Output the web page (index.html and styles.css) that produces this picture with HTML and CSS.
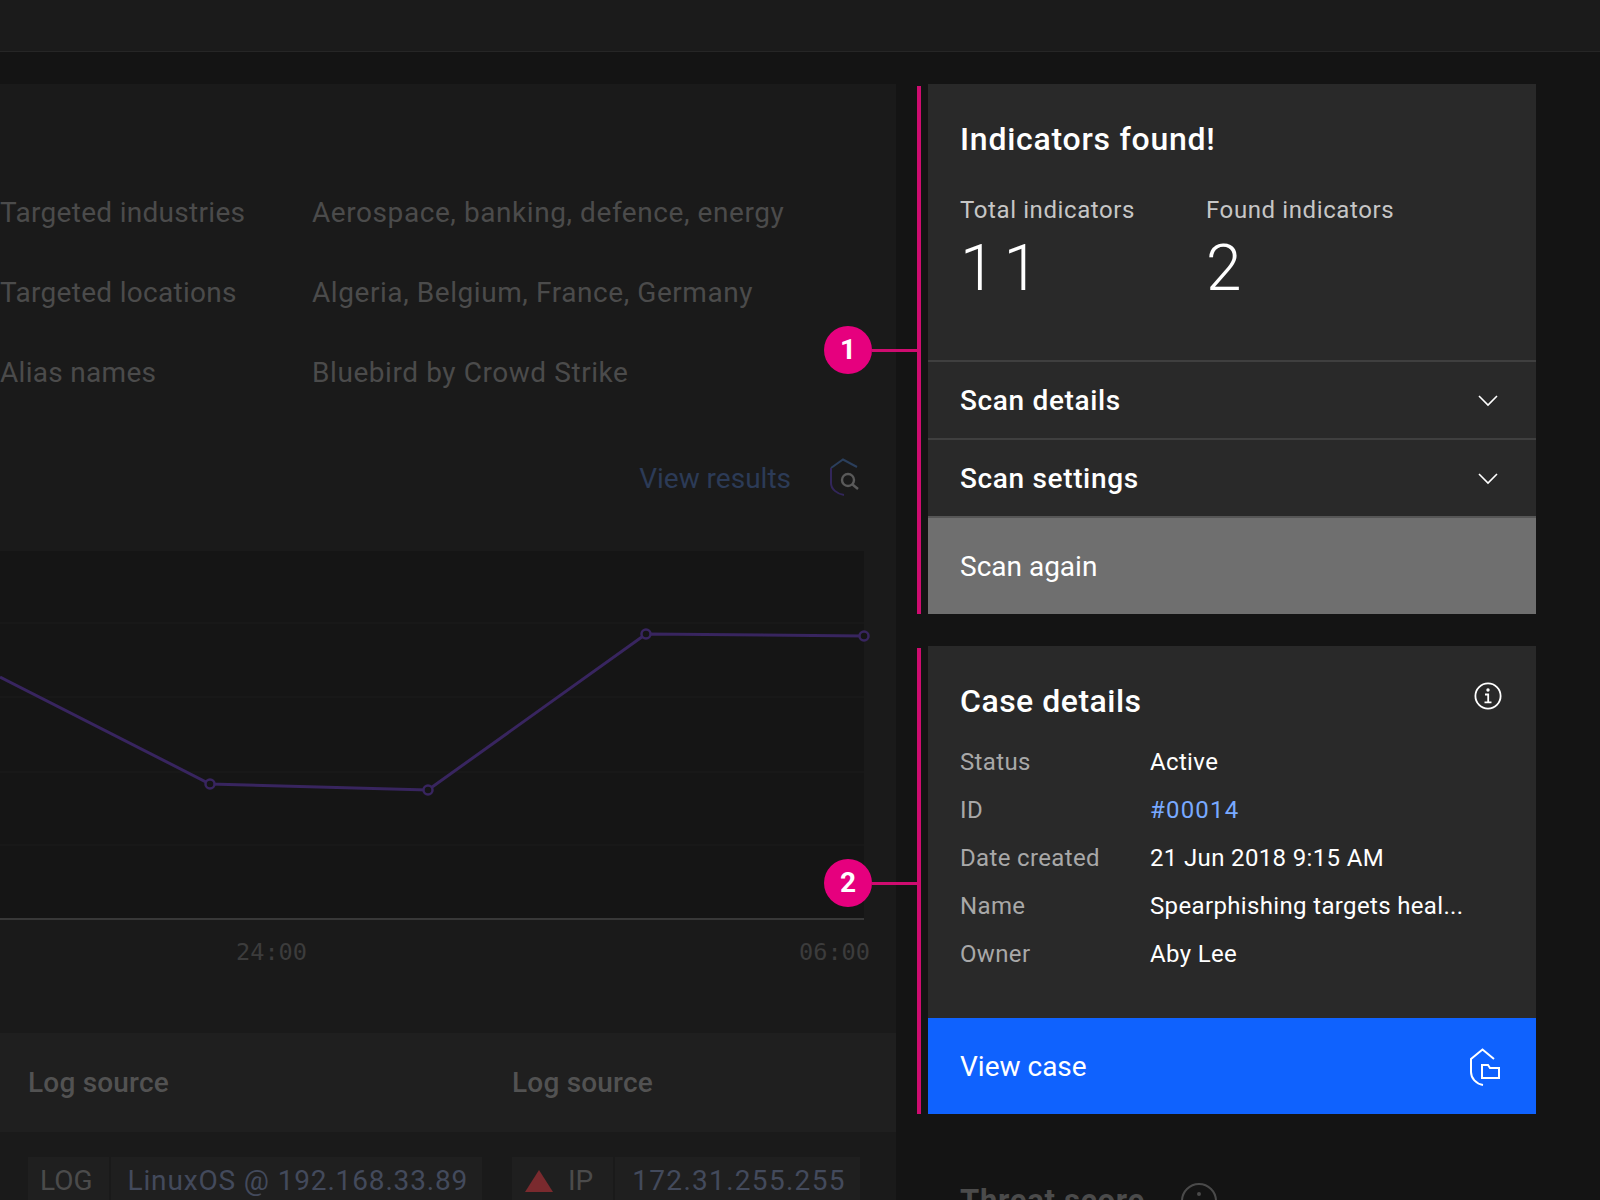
FILE: index.html
```html
<!DOCTYPE html>
<html lang="en">
<head>
<meta charset="utf-8"/>
<title>Threat details</title>
<link rel="stylesheet" href="styles.css">
</head>
<body>
<header class="topbar"></header>
<div class="page">
	<main class="main">
		<section class="facts">
			<dl class="facts-list">
				<dt>Targeted industries</dt>
				<dd>Aerospace, banking, defence, energy</dd>
				<dt>Targeted locations</dt>
				<dd>Algeria, Belgium, France, Germany</dd>
				<dt>Alias names</dt>
				<dd>Bluebird by Crowd Strike</dd>
			</dl>
			<div class="results-link">
				<span>View results</span>
				<svg viewBox="0 0 30 38" width="30" height="38" fill="none" stroke-width="2">
					<path d="M27 9 13 1.500 1 10" stroke="#2b3f5c"/>
					<path d="M1 10v15c0 6 6 11 13 12" stroke="#32265a"/>
					<circle cx="18" cy="22" r="6" stroke="#5a5a5a" stroke-width="2.4"/>
					<path d="m22.500 26.500 5.500 4.500" stroke="#5a5a5a" stroke-width="2.4"/>
				</svg>
			</div>
		</section>
		<section class="chart">
			<svg class="chart-plot" viewBox="0 0 872 369" width="872" height="369">
				<rect class="plot-bg" width="864" height="368"/>
				<path class="grid" d="M0 72H864M0 146H864M0 221H864M0 294H864"/>
				<path class="axis" d="M0 368H864"/>
				<path class="series" d="M0 126 210 233 428 239 646 83 864 85"/>
				<circle class="point" cx="210" cy="233" r="4.500"/>
				<circle class="point" cx="428" cy="239" r="4.500"/>
				<circle class="point" cx="646" cy="83" r="4.500"/>
				<circle class="point" cx="864" cy="85" r="4.500"/>
			</svg>
			<div class="chart-axis">
				<span>24:00</span>
				<span>06:00</span>
			</div>
		</section>
		<section class="logs">
			<div class="logs-head">
				<span>Log source</span>
				<span>Log source</span>
			</div>
			<div class="logs-row">
				<div class="tag-group">
					<span class="tag">LOG</span>
					<span class="tag tag-value">LinuxOS @ 192.168.33.89</span>
				</div>
				<div class="tag-group">
					<span class="tag tag-warn"><i class="warn"></i>IP</span>
					<span class="tag tag-value tag-ip">172.31.255.255</span>
				</div>
			</div>
		</section>
	</main>
	<aside class="side">
		<section class="card">
			<span class="marker">1</span>
			<div class="card-body">
				<h2>Indicators found!</h2>
				<div class="stats">
					<div class="stat">
						<span class="stat-label">Total indicators</span>
						<span class="stat-num">11</span>
					</div>
					<div class="stat">
						<span class="stat-label">Found indicators</span>
						<span class="stat-num">2</span>
					</div>
				</div>
			</div>
			<div class="accordion">
				<span>Scan details</span>
				<svg viewBox="0 0 20 12" width="20" height="12" fill="none" stroke="#fff" stroke-width="1.6"><path d="m1 1 9 9 9-9"/></svg>
			</div>
			<div class="accordion">
				<span>Scan settings</span>
				<svg viewBox="0 0 20 12" width="20" height="12" fill="none" stroke="#fff" stroke-width="1.6"><path d="m1 1 9 9 9-9"/></svg>
			</div>
			<button class="btn btn-grey">Scan again</button>
		</section>
		<section class="card card-case">
			<span class="marker">2</span>
			<div class="card-body case-body">
				<div class="case-head">
					<h2>Case details</h2>
					<svg viewBox="0 0 28 28" width="28" height="28" fill="none" stroke="#fff" stroke-width="1.8">
						<circle cx="14" cy="14" r="12.6"/>
						<path d="M11 12.500h3.200V20M10.500 20.400h7"/>
						<circle cx="14" cy="8" r=".8" fill="#fff"/>
					</svg>
				</div>
				<dl class="case-list">
					<dt>Status</dt><dd>Active</dd>
					<dt>ID</dt><dd class="link">#00014</dd>
					<dt>Date created</dt><dd>21 Jun 2018 9:15 AM</dd>
					<dt>Name</dt><dd>Spearphishing targets heal...</dd>
					<dt>Owner</dt><dd>Aby Lee</dd>
				</dl>
			</div>
			<button class="btn btn-blue">
				<span>View case</span>
				<svg viewBox="0 0 30 38" width="30" height="38" fill="none" stroke="#fff" stroke-width="2">
					<path d="M24 11 12.500 1.500 1 11v13c0 6 5 12 12 13"/>
					<path d="M12 30V17h6l2 3h9v10z"/>
				</svg>
			</button>
		</section>
		<div class="threat">
			<span>Threat score</span>
			<svg viewBox="0 0 36 36" width="36" height="36" fill="none" stroke="#4a4a4a" stroke-width="2"><circle cx="18" cy="18" r="17"/><circle cx="18" cy="11" r="1" fill="#4a4a4a"/></svg>
		</div>
	</aside>
</div>
</body>
</html>
```

FILE: styles.css
```css
html,
body {
	margin:0;
	height:1200px;
	overflow:hidden;
}
body {
	background:#141414;
	color:#fff;
	font:400 24px/1.2 Roboto, "Noto Sans", sans-serif;
}
h2 {
	margin:0;
	font:500 32px/38px Roboto, sans-serif;
	letter-spacing:.75px;
}
dl,
dd {
	margin:0;
}
.topbar {
	height:51px;
	background:#1b1b1b;
	border-bottom:1px solid #262626;
}
.page {
	display:flex;
	padding-top:32px;
}
.main {
	width:896px;
	height:1116px;
	background:#1a1a1a;
}
.facts {
	height:467px;
	box-sizing:border-box;
	padding-top:89px;
	color:#4b4b4b;
	font-size:28px;
}
.facts-list {
	display:grid;
	grid-template-columns:312px 1fr;
	grid-auto-rows:80px;
	align-items:center;
	letter-spacing:.3px;
}
.facts-list dd {
	letter-spacing:.57px;
}
.results-link {
	display:flex;
	justify-content:flex-end;
	align-items:center;
	gap:39px;
	height:38px;
	margin-top:47px;
	padding-right:36px;
	color:#2c3b57;
}
.results-link svg {
	margin-bottom:4px;
}
.chart-plot {
	display:block;
}
.plot-bg {
	fill:#151515;
}
.grid {
	stroke:#1c1c1c;
	fill:none;
}
.axis {
	stroke:#383838;
	stroke-width:2;
	fill:none;
}
.series {
	stroke:#38255f;
	stroke-width:3;
	fill:none;
}
.point {
	stroke:#38255f;
	stroke-width:2.5;
	fill:#151515;
}
.chart-axis {
	display:flex;
	justify-content:space-between;
	width:634px;
	margin-left:236px;
	padding-top:18px;
	color:#3c3c3c;
	font:400 23.6px/28px "DejaVu Sans Mono", monospace;
}
.logs-head {
	display:grid;
	grid-template-columns:484px 1fr;
	align-items:center;
	height:99px;
	margin-top:67px;
	padding-left:28px;
	background:#1f1f1f;
	color:#525252;
	font-size:28px;
	font-weight:500;
	letter-spacing:.2px;
}
.logs-row {
	display:grid;
	grid-template-columns:484px 1fr;
	padding:25px 0 0 28px;
	font-size:28px;
}
.tag-group {
	display:flex;
	gap:2px;
}
.tag {
	display:flex;
	align-items:center;
	gap:14px;
	height:48px;
	padding:0 16px 0 12px;
	background:#1f1f1f;
	color:#4b4b4b;
}
.tag-warn {
	gap:15px;
	padding:0 20px 0 13px;
}
.tag-value {
	padding:0 14px 0 17px;
	color:#434a5c;
	letter-spacing:.85px;
}
.tag-ip {
	letter-spacing:1.3px;
}
.warn {
	width:0;
	height:0;
	border:14px solid transparent;
	border-top:0;
	border-bottom:22px solid #7a2a2e;
}
.side {
	flex:none;
	width:608px;
	margin-left:32px;
}
.card {
	position:relative;
	background:#292929;
	height:530px;
	display:flex;
	flex-direction:column;
}
.card:before {
	content:'';
	position:absolute;
	left:-11px;
	top:2px;
	bottom:0;
	width:4px;
	background:#cf0c70;
}
.marker {
	position:absolute;
	left:-104px;
	top:242px;
	width:48px;
	height:48px;
	border-radius:50%;
	background:#e6007e;
	font:700 28px/48px Roboto, sans-serif;
	text-align:center;
}
.marker:after {
	content:'';
	position:absolute;
	left:48px;
	top:23px;
	width:45px;
	height:3px;
	background:#cf0c70;
}
.card-body {
	flex:1;
	padding:36px 32px 0;
}
.stats {
	display:flex;
	margin-top:38px;
}
.stat {
	display:flex;
	flex-direction:column;
	width:246px;
}
.stat-label {
	color:#c6c6c6;
	letter-spacing:.6px;
}
.stat-num {
	padding-top:8px;
	font-size:64px;
	font-weight:300;
	line-height:72px;
	letter-spacing:8px;
}
.accordion {
	display:flex;
	justify-content:space-between;
	align-items:center;
	height:75px;
	padding:1px 38px 0 32px;
	border-top:2px solid #3f3f3f;
	font-size:28px;
	font-weight:500;
	letter-spacing:.65px;
}
.btn {
	display:flex;
	align-items:center;
	justify-content:space-between;
	width:100%;
	padding:0 32px;
	border:0;
	color:#fff;
	font:400 28px/1.2 Roboto, sans-serif;
}
.btn-grey {
	height:98px;
	padding-top:2px;
	background:#6f6f6f;
	border-top:2px solid #565656;
}
.btn-blue {
	height:96px;
	padding:2px 36px 0 32px;
	background:#0f62fe;
}
.card-case {
	height:468px;
	margin-top:32px;
}
.card-case h2 {
	letter-spacing:.5px;
}
.card-case .marker {
	top:213px;
}
.case-body {
	padding-top:36px;
}
.case-head {
	display:flex;
	justify-content:space-between;
	align-items:flex-start;
	padding-right:2px;
}
.case-list {
	display:grid;
	grid-template-columns:190px 1fr;
	grid-auto-rows:48px;
	align-items:center;
	margin-top:18px;
	letter-spacing:.35px;
}
.case-list dt {
	color:#a8a8a8;
}
.link {
	color:#78a9ff;
	letter-spacing:1.2px;
}
.threat {
	display:flex;
	align-items:center;
	gap:36px;
	margin-top:68px;
	padding-left:32px;
	color:#4b4b4b;
	font-size:31px;
	font-weight:700;
	letter-spacing:.7px;
}
```
